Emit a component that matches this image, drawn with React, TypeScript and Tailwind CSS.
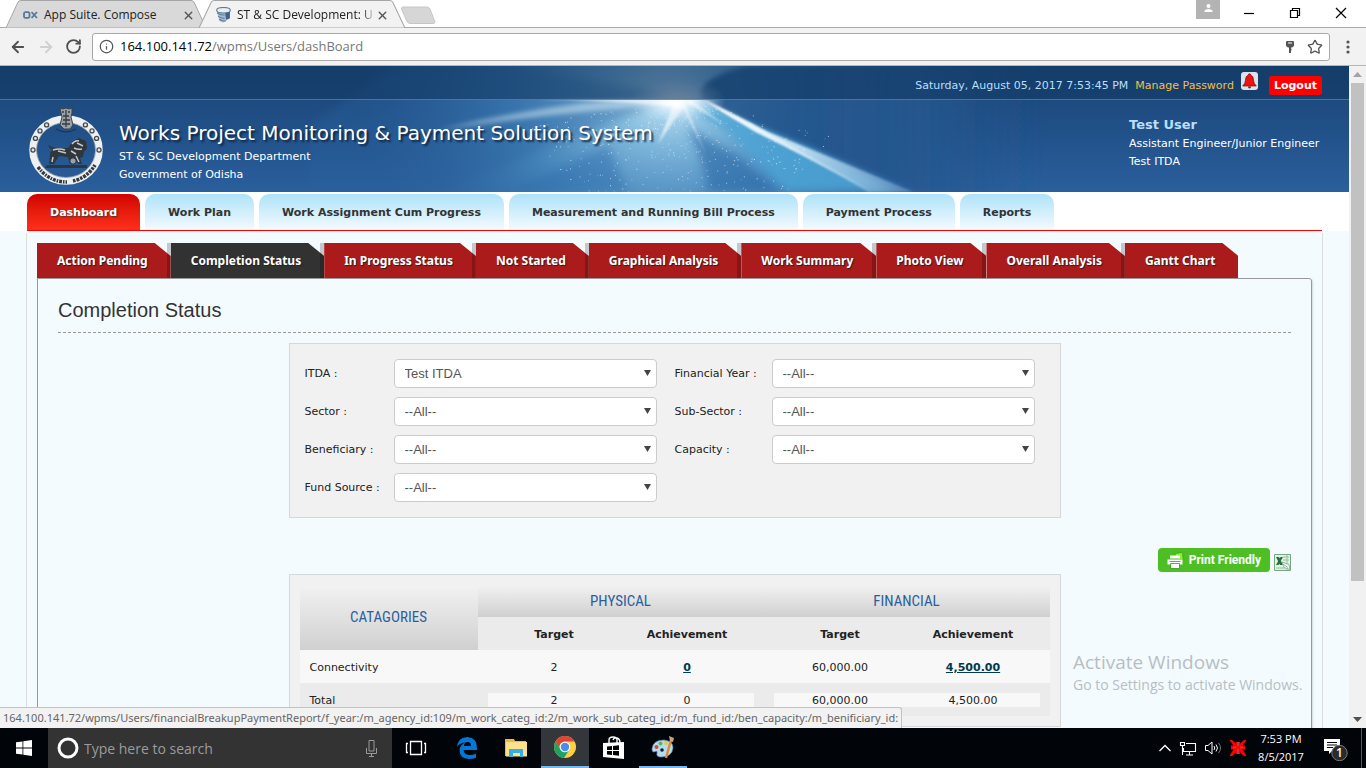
import React from 'react';
import { ArrowLeft, ArrowRight, Info, RotateCw, Star, X } from 'lucide-react';

const SEGOE = "font-['Open_Sans','Noto_Sans',sans-serif]";
const VERDANA = "font-['DejaVu_Sans',sans-serif]";

function BrowserTab({ title, active, icon, className }: { title: string; active?: boolean; icon: React.ReactNode; className: string }) {
  return (
    <div className={`relative flex h-7 items-center ${className}`}>
      <svg className="absolute inset-0 h-full w-full" viewBox="0 0 200 28" preserveAspectRatio="none" aria-hidden="true">
        <path
          d="M0 28 L12 2 Q13 .5 15 .5 H185 Q187 .5 188 2 L200 28Z"
          fill={active ? '#f2f2f2' : '#d9d9d9'}
          stroke="#a5a5a5"
        />
      </svg>
      <div className="relative flex h-full w-full items-center pt-[2px]">
        <span className="flex w-4 shrink-0 justify-center">{icon}</span>
        <span
          className={`ml-[6px] min-w-0 flex-1 text-xs whitespace-nowrap text-[#222] ${active ? '[mask-image:linear-gradient(to_right,black_90%,transparent)]' : ''}`}
        >
          {title}
        </span>
        <button aria-label={`Close ${title}`} className="shrink-0 text-[#555]">
          <X size={13} strokeWidth={2.6} />
        </button>
      </div>
    </div>
  );
}

function BrowserChrome() {
  return (
    <div className={`shrink-0 ${SEGOE}`}>
      <div className="flex h-7 border-b border-[#a9a9a9] bg-white">
        <BrowserTab
          title="App Suite. Compose"
          className="ml-[6px] w-[200px] pr-[11px] pl-4"
          icon={
            <svg width="15" height="8" viewBox="0 0 15 8" fill="none" stroke="#56789a" strokeWidth="1.800" aria-hidden="true">
              <rect x="1" y="1.200" width="5.500" height="5.600" rx="1.500" />
              <path d="M8.500 1l5.500 6M14 1L8.500 7" />
            </svg>
          }
        />
        <BrowserTab
          title="ST & SC Development: U"
          active
          className="-ml-[7px] w-[206px] pr-[16px] pl-4"
          icon={
            <svg width="15" height="16" viewBox="0 0 14 15" aria-hidden="true">
              <path d="M1 3v2l2 8q2 1.500 4 1.500l6-4V3z" fill="#a9bccd" />
              <ellipse cx="7" cy="3" rx="6.400" ry="2.600" fill="#e8eef3" stroke="#5c7b99" />
              <path d="M1 5.500q3 2.500 7 2M2 8.500q3 2.500 6 2M3 11.500q3 2 6 1.500" fill="none" stroke="#5c7b99" />
              <path d="M8.500 6l4.500-1.500v6l-3.500 1.500z" fill="#3f628a" />
            </svg>
          }
        />
        <button aria-label="New tab" className="ml-[-5px] h-[24px] w-[36px]">
          <svg width="36" height="24" viewBox="0 0 36 24" aria-hidden="true">
            <path d="M3 7h24q2 0 3 2l5 13q0 1.500-2 1.500H10q-2 0-3-2L1.500 9Q1.500 7 3 7z" fill="#d6d6d6" stroke="#c6c6c6" />
          </svg>
        </button>
        <div className="flex-1" />
        <button aria-label="Profile" className="flex h-[19px] w-6 items-start justify-center bg-[#b3b3b3] pt-1">
          <svg width="9" height="9" viewBox="0 0 9 9" fill="#fff" aria-hidden="true">
            <circle cx="4.500" cy="2" r="2" />
            <path d="M.5 8V6.500Q2 5 4.500 5t4 1.500V8z" />
          </svg>
        </button>
        <div className="flex w-[146px] pl-[6px]">
          {[
            ['Minimize', 'M1 6.500h10'],
            ['Restore', 'M1.500 3.500h7v7h-7zM3.500 3.500v-2h7v7h-2'],
            ['Close', 'M1 1l10 10M11 1L1 11'],
          ].map(([name, d]) => (
            <button key={name} aria-label={name} className="flex h-[26px] w-[46px] items-center justify-center">
              <svg width="12" height="12" viewBox="0 0 12 12" fill="none" stroke="#000" strokeWidth="1.200" aria-hidden="true">
                <path d={d} />
              </svg>
            </button>
          ))}
        </div>
      </div>
      <div className="flex h-[38px] items-center border-b border-[#b6b6b6] bg-[#f2f2f2] pr-4 pl-[9px]">
        <button aria-label="Back" className="text-[#505050]"><ArrowLeft size={18} strokeWidth={2.4} /></button>
        <button aria-label="Forward" className="ml-[10px] text-[#d0d0d0]"><ArrowRight size={18} strokeWidth={2.4} /></button>
        <button aria-label="Reload" className="ml-[10px] text-[#505050]"><RotateCw size={17} strokeWidth={2.6} /></button>
        <div className="ml-[10px] flex h-[28px] flex-1 items-center rounded-[3px] border border-[#a9a9a9] bg-white px-[6px]">
          <Info size={15} className="text-[#555]" />
          <span className="ml-[6px] flex-1 text-[13px] text-[#777]">
            <span className="text-black">164.100.141.72</span>/wpms/Users/dashBoard
          </span>
          <button aria-label="Saved passwords">
            <svg width="10" height="14" viewBox="0 0 10 14" aria-hidden="true">
              <path d="M2 1h6q1 0 1 1v4L7 7.500H3L1 6V2q0-1 1-1z" fill="#555" />
              <path d="M3 3h4" stroke="#fff" />
              <path d="M5 7v6M5 9.500h1.500" stroke="#555" strokeWidth="2" />
            </svg>
          </button>
          <button aria-label="Bookmark this page" className="ml-[12px] text-[#555]"><Star size={16} strokeWidth={2} /></button>
        </div>
        <button aria-label="Menu" className="ml-4">
          <svg width="4" height="14" viewBox="0 0 4 14" fill="#555" aria-hidden="true">
            <circle cx="2" cy="2" r="1.600" /><circle cx="2" cy="7" r="1.600" /><circle cx="2" cy="12" r="1.600" />
          </svg>
        </button>
      </div>
    </div>
  );
}

function noise(n: number) {
  const v = Math.sin(n * 127.1 + 11.7) * 43758.5453;
  return v - Math.floor(v);
}

const sparks = Array.from({ length: 420 }, (_, i) => {
  const angle = 0.25 + noise(i) * 2.7;
  const dist = 10 + noise(i + 900) * 150;
  return { x: 372 + Math.cos(angle) * dist, y: 34 + Math.sin(angle) * dist * 0.8, o: 0.25 + noise(i + 2000) * 0.6 };
});

function BannerArt() {
  return (
    <svg className="absolute top-0 left-1/2 h-full w-[734px] -translate-x-1/2" viewBox="0 0 734 126" aria-hidden="true">
      <defs>
        <radialGradient id="glow" gradientUnits="userSpaceOnUse" cx="360" cy="30" r="310" gradientTransform="translate(0 6) scale(1 .8)">
          <stop offset="0" stopColor="#c6e8f7" />
          <stop offset=".2" stopColor="#85bde0" stopOpacity=".95" />
          <stop offset=".5" stopColor="#4b8fc4" stopOpacity=".75" />
          <stop offset="1" stopColor="#2e66a0" stopOpacity="0" />
        </radialGradient>
        <radialGradient id="sun">
          <stop offset="0" stopColor="#fff" />
          <stop offset=".3" stopColor="#fff" stopOpacity=".75" />
          <stop offset="1" stopColor="#cbeafa" stopOpacity="0" />
        </radialGradient>
        <linearGradient id="beam" x1="0" y1="0" x2="1" y2="1">
          <stop offset="0" stopColor="#fff" />
          <stop offset=".45" stopColor="#d8edf8" stopOpacity=".85" />
          <stop offset="1" stopColor="#9cc2e0" stopOpacity=".35" />
        </linearGradient>
        <linearGradient id="shade" x1="0" y1="0" x2="1" y2="0">
          <stop offset="0" stopColor="#1f4f86" stopOpacity=".85" />
          <stop offset=".5" stopColor="#22538a" stopOpacity=".9" />
          <stop offset="1" stopColor="#24588f" stopOpacity="0" />
        </linearGradient>
        <filter id="soft1" x="-20%" y="-20%" width="140%" height="140%"><feGaussianBlur stdDeviation="1.200" /></filter>
        <filter id="soft2" x="-20%" y="-20%" width="140%" height="140%"><feGaussianBlur stdDeviation="2.500" /></filter>
        <filter id="soft4" x="-20%" y="-20%" width="140%" height="140%"><feGaussianBlur stdDeviation="5" /></filter>
      </defs>
      <rect width="734" height="126" fill="url(#glow)" />
      <path d="M90 0H200L370 30L130 126H0V60z" fill="#2a629e" opacity=".35" filter="url(#soft4)" />
      <path d="M400 126Q395 90 380 62L430 90L470 126Z" fill="#2b67a6" opacity=".6" filter="url(#soft4)" />
      <path d="M370 33L460 62L590 126H478L420 66Z" fill="#4ea5d6" opacity=".85" filter="url(#soft4)" />
      <path d="M200 126L300 80L320 126Z" fill="#2f6cab" opacity=".45" filter="url(#soft4)" />
      <path d="M394 33Q440 58 500 80L612 126H734V0H440Q400 8 392 26Z" fill="url(#shade)" filter="url(#soft2)" />
      <path d="M370 30Q250 34 130 64Q250 46 372 38Z" fill="#dff1fa" opacity=".5" filter="url(#soft2)" />
      <path d="M340 33H372V42Q340 36 230 33Z" fill="#fff" opacity=".6" filter="url(#soft1)" />
      <path d="M366 36L350 78L376 40Z" fill="#fff" opacity=".6" filter="url(#soft1)" />
      <path d="M372 36L398 88L377 38Z" fill="#fff" opacity=".45" filter="url(#soft1)" />
      <path d="M378 36L418 60L384 34Z" fill="#fff" opacity=".5" filter="url(#soft1)" />
      <path d="M394 33Q430 50 460 66Q520 90 605 126H560Q500 90 448 66Q420 50 394 33Z" fill="url(#beam)" filter="url(#soft1)" />
      <path d="M394 33Q430 50 460 67Q500 90 565 126Q500 92 448 66Z" fill="#fff" opacity=".5" filter="url(#soft1)" />
      <ellipse cx="370" cy="34" rx="48" ry="22" fill="url(#sun)" />
      {sparks.map((s, i) => (
        <rect key={i} x={s.x} y={s.y} width="1" height="1" fill="#e6f6ff" opacity={s.o} />
      ))}
    </svg>
  );
}

function Emblem() {
  const studs = [180, 202, 218, 234, 306, 322, 338, 0];
  return (
    <svg width="74" height="78" viewBox="0 0 74 78" role="img" aria-label="Government of Odisha emblem">
      <ellipse cx="37" cy="43" rx="33" ry="31" fill="none" stroke="#eef0f1" strokeWidth="7.500" />
      <ellipse cx="37" cy="43" rx="29.500" ry="27.500" fill="none" stroke="#8e979e" strokeWidth=".8" />
      {studs.map((deg) => {
        const t = (deg * Math.PI) / 180;
        return (
          <g key={deg}>
            <circle cx={37 + 33 * Math.cos(t)} cy={43 + 31 * Math.sin(t)} r="2.700" fill="#444b50" />
            <circle cx={37 + 33 * Math.cos(t)} cy={43 + 31 * Math.sin(t)} r="1.400" fill="#dfe3e5" />
          </g>
        );
      })}
      <path d="M9 60Q20 75 38 75" fill="none" stroke="#33393d" strokeWidth="3.500" strokeDasharray="3 1 1.500 1" />
      <path d="M44 74Q58 71 66 58" fill="none" stroke="#33393d" strokeWidth="3.500" strokeDasharray="2.500 1 3 1" />
      <path d="M31 1l3 1 3-1 3 1 3-1 0 5-1 4 1 4 1 4-3 4h-6l-4-4 1-4 1-4-1-4z" fill="#9aa2a7" stroke="#3b4348" />
      <path d="M33 5h2M39 5h2M34 9h6M34 13h7M33 17h8M37 3v17" stroke="#353d42" strokeWidth="1.300" />
      <path d="M27 22q10 6 20 0" fill="none" stroke="#20303e" />
      <path d="M18 58h40v3H16z" fill="#2e363b" />
      <path d="M20 57l1-9q0-4 3-5-4-1-5-5l4 2q3 1 7 1h9l5-7 6-3 7 3 1 7-3 4-1 5-3 1 2 6h-4l-3-6-3 4 2 2h-4l-2-7-9-1-5 8z" fill="#30373c" />
      <path d="M24 43q6-2 12 0M43 37q3-4 7-3M45 41q4 2 8 1M24 50l-1 5M47 49l3 6M29 44l8 2M48 36l6 3M42 44l5 3" fill="none" stroke="#c2c9cd" strokeWidth="1.500" />
      <circle cx="44" cy="54" r="3.200" fill="#9aa3a8" stroke="#252b30" />
    </svg>
  );
}

function Header() {
  return (
    <header className="relative h-[126px] overflow-hidden bg-linear-to-b from-[#1a4474] via-[#215088] to-[#2a5f9d] text-white">
      <BannerArt />
      <div className="relative flex h-[34px] items-center justify-end border-b border-[#7fa3c6]/50 bg-[#123a66]/65 pt-[6px] pr-[27px] text-[11px]">
        <span className="pt-[2px] text-[#b9dffc]">Saturday, August 05, 2017 7:53:45 PM</span>
        <a href="#password" className="ml-[7px] pt-[2px] text-[#eec04a]">Manage Password</a>
        <button aria-label="Notifications" className="mb-[10px] ml-[7px] flex h-[18px] w-[17px] items-center justify-center rounded-[3px] bg-[#dce4ea]">
          <svg width="15" height="16" viewBox="0 0 15 16" aria-hidden="true">
            <path d="M7.500.8Q8.800.8 8.800 2.200Q11.500 3 11.500 7q0 3.500 2.800 6H.7Q3.500 10.500 3.500 7q0-4 2.700-4.800Q6.200.8 7.500.8z" fill="#ec1313" stroke="#7c0c0c" strokeWidth=".7" />
            <path d="M6 13.500h3q0 2-1.500 2T6 13.500z" fill="#8c0c0c" />
          </svg>
        </button>
        <button className="ml-[11px] h-[19px] rounded-[3px] bg-[#f00] px-[5px] pt-px font-bold">Logout</button>
      </div>
      <div className="relative flex items-start pr-[27px] pl-[29px]">
        <div className="mt-[7px]"><Emblem /></div>
        <div className="ml-4 flex-1 pt-[21px]">
          <h1 className="text-[20px] leading-[25px] [text-shadow:2px_2px_2px_#10243a]">Works Project Monitoring &amp; Payment Solution System</h1>
          <p className="pt-[2px] text-[11px] leading-[18px]">ST &amp; SC Development Department</p>
          <p className="text-[11px] leading-[18px]">Government of Odisha</p>
        </div>
        <div className="w-[193px] pt-[15px] text-[11px] leading-[18px]">
          <p className="text-[13px] leading-5 font-bold text-[#b9dffc]">Test User</p>
          <p>Assistant Engineer/Junior Engineer</p>
          <p>Test ITDA</p>
        </div>
      </div>
    </header>
  );
}

const mainNav = ['Dashboard', 'Work Plan', 'Work Assignment Cum Progress', 'Measurement and Running Bill Process', 'Payment Process', 'Reports'];

function MainNav() {
  return (
    <div className="bg-white pt-[2px]">
      <nav className="mx-[27px] flex gap-[5px] border-b border-[#f00]">
        {mainNav.map((item, i) => (
          <a
            key={item}
            href={`#${item}`}
            className={
              i === 0
                ? 'rounded-t-[10px] bg-linear-to-b from-[#d00000] to-[#ff2f1a] px-[23px] pt-px text-[11px] leading-[35px] font-bold whitespace-nowrap text-white [text-shadow:1px_1px_2px_#333]'
                : 'rounded-t-[10px] bg-linear-to-b from-[#aee2f9] to-[#f3fbff] px-[23px] pt-px text-[11px] leading-[35px] font-bold whitespace-nowrap text-[#333]'
            }
          >
            {item}
          </a>
        ))}
      </nav>
    </div>
  );
}

const subTabs = ['Action Pending', 'Completion Status', 'In Progress Status', 'Not Started', 'Graphical Analysis', 'Work Summary', 'Photo View', 'Overall Analysis', 'Gantt Chart'];

function SubTabs() {
  return (
    <div role="tablist" className="flex">
      {subTabs.map((item, i) => (
        <button
          key={item}
          role="tab"
          aria-selected={i === 1}
          className="relative h-[35px] font-['Noto_Sans',sans-serif] text-xs font-bold whitespace-nowrap text-white"
        >
          <span
            className={`flex h-full items-center pr-[23px] pl-5 [clip-path:polygon(0_0,calc(100%_-_16px)_0,100%_13px,100%_100%,0_100%)] [text-shadow:1px_1px_1px_#222] ${i === 1 ? 'bg-[#323232]' : 'bg-[#ab1b1b]'}`}
          >
            {item}
          </span>
          {i < subTabs.length - 1 && <span className="absolute inset-y-0 right-0 w-1 bg-black/20" />}
        </button>
      ))}
    </div>
  );
}

const filters: [string, string][] = [
  ['ITDA', 'Test ITDA'],
  ['Financial Year', '--All--'],
  ['Sector', '--All--'],
  ['Sub-Sector', '--All--'],
  ['Beneficiary', '--All--'],
  ['Capacity', '--All--'],
  ['Fund Source', '--All--'],
];

function Filters() {
  return (
    <form className="grid grid-cols-[89px_263px_115px_263px] items-center gap-y-[9px] border border-[#d4d8db] bg-[#f1f1f1] py-[15px] pl-[15px]">
      {filters.map(([label, value], i) => (
        <React.Fragment key={label}>
          <label htmlFor={`filter-${i}`} className={i % 2 ? 'pt-[2px] pl-[18px] text-[11px] whitespace-nowrap' : 'pt-[2px] text-[11px] whitespace-nowrap'}>
            {label} :
          </label>
          <div className="relative">
            <select
              id={`filter-${i}`}
              className="block h-[29px] w-full appearance-none rounded-[4px] border border-[#ccc] bg-white px-[10px] font-['Liberation_Sans',sans-serif] text-[13px] text-[#555]"
            >
              <option>{value}</option>
            </select>
            <svg className="pointer-events-none absolute top-[11px] right-[6px]" width="7" height="6" viewBox="0 0 7 6" aria-hidden="true">
              <path d="M0 0h7L3.500 6z" fill="#444" />
            </svg>
          </div>
        </React.Fragment>
      ))}
    </form>
  );
}

function SummaryTable() {
  const group = "bg-linear-to-b from-[#f2f2f2] to-[#d0d0d0] font-['Liberation_Sans_Narrow','Roboto_Condensed','Roboto',sans-serif] text-[15px] font-normal text-[#2a5f9d]";
  return (
    <div className="border border-[#d4d8db] bg-[#f1f1f1] p-[10px]">
      <table className="w-full table-fixed border-collapse text-center text-[11px] text-[#222]">
        <colgroup>
          <col className="w-[178px]" />
          <col /><col /><col /><col />
        </colgroup>
        <thead>
          <tr className="h-8">
            <th rowSpan={2} className={group}>CATAGORIES</th>
            <th colSpan={2} className={group}>PHYSICAL</th>
            <th colSpan={2} className={group}>FINANCIAL</th>
          </tr>
          <tr className="h-[33px] bg-[#ebebeb]">
            <th className="pt-[3px] pl-[10px]">Target</th>
            <th className="pt-[3px] pr-[10px]">Achievement</th>
            <th className="pt-[3px] pl-[10px]">Target</th>
            <th className="pt-[3px] pr-[10px]">Achievement</th>
          </tr>
        </thead>
        <tbody>
          <tr className="h-[33px] bg-[#f8f8f8]">
            <td className="pt-[3px] pl-[10px] text-left">Connectivity</td>
            <td className="pt-[3px] pl-[10px]">2</td>
            <td className="pt-[3px] pr-[10px]"><a href="#physical" className="font-bold text-[#003a4c] underline">0</a></td>
            <td className="pt-[3px] pl-[10px]">60,000.00</td>
            <td className="pt-[3px] pr-[10px]"><a href="#financial" className="font-bold text-[#003a4c] underline">4,500.00</a></td>
          </tr>
          <tr className="h-[33px] bg-[#ebebeb]">
            <td className="pt-[3px] pl-[10px] text-left">Total</td>
            <td className="pl-[10px]"><div className="bg-[#f8f8f8] pt-px leading-[13px]">2</div></td>
            <td className="pr-[10px]"><div className="bg-[#f8f8f8] pt-px leading-[13px]">0</div></td>
            <td className="pl-[10px]"><div className="bg-[#f8f8f8] pt-px leading-[13px]">60,000.00</div></td>
            <td className="pr-[10px]"><div className="bg-[#f8f8f8] pt-px leading-[13px]">4,500.00</div></td>
          </tr>
        </tbody>
      </table>
    </div>
  );
}

function ExportBar() {
  return (
    <div className="mt-[30px] mb-[2px] flex items-start justify-end gap-1">
      <button className="flex h-6 items-center gap-[5px] rounded-[4px] bg-[#4dbf24] px-[9px] font-['Roboto',sans-serif] text-xs font-bold text-white">
        <svg width="17" height="17" viewBox="0 0 17 17" aria-hidden="true">
          <path d="M8 1.500L15.500.5 16 8 9 6z" fill="#8bf03a" stroke="#2f9a10" strokeWidth=".6" />
          <path d="M3 3.500h10v3h-10z" fill="#fff" />
          <path d="M.5 7.500h15v5H.5z" fill="#fff" />
          <path d="M2.500 9.500h11" stroke="#4dbf24" />
          <path d="M3.500 11.500h9v5h-9z" fill="#fff" stroke="#2f9a10" strokeWidth=".8" />
        </svg>
        Print Friendly
      </button>
      <button aria-label="Export to Excel" className="mt-[6px]">
        <svg width="17" height="17" viewBox="0 0 17 17" aria-hidden="true">
          <path d="M.5.5h16v16H.5z" fill="#e3f1e6" stroke="#76a684" />
          <path d="M9 3h6M9 6h6M13 1v15M2 14h9" stroke="#8fc39c" />
          <path d="M2 3h3l4 8H6zM6.500 3H9l-4.500 8H2z" fill="#24713b" />
          <path d="M8 8l7 2.500 1 5-6-2z" fill="#f4fbf5" stroke="#7aa587" strokeWidth=".8" />
          <path d="M9 10l5 3.500" stroke="#7aa587" strokeWidth=".8" />
        </svg>
      </button>
    </div>
  );
}

function Page() {
  return (
    <div className={`min-h-0 min-w-0 flex-1 overflow-hidden bg-[#f3fbff] text-[#222] ${VERDANA}`}>
      <Header />
      <MainNav />
      <main className="mx-[26px] mt-[2px] border-x border-[#ddd] px-[10px] pt-[10px]">
        <SubTabs />
        <section className="rounded-tr-[3px] border border-[#999] px-5 pt-[18px] pb-40 shadow-[1px_1px_2px_#0002]">
          <h2 className="border-b border-dashed border-[#999] pb-[9px] font-['Liberation_Sans',sans-serif] text-[20px] leading-[26px] text-[#333]">
            Completion Status
          </h2>
          <div className="mx-auto mt-[10px] max-w-[772px]">
            <Filters />
          </div>
          <ExportBar />
          <div className="mx-auto max-w-[772px]">
            <SummaryTable />
          </div>
        </section>
      </main>
    </div>
  );
}

function Scrollbar() {
  return (
    <div className="flex w-[17px] shrink-0 flex-col items-center bg-[#f1f1f1] py-[6px]" aria-hidden="true">
      <svg width="9" height="5" viewBox="0 0 9 5"><path d="M0 5L4.500 0 9 5z" fill="#a3a3a3" /></svg>
      <div className="mt-[6px] h-[498px] w-[13px] bg-[#c1c1c1]" />
      <div className="flex-1" />
      <svg width="9" height="5" viewBox="0 0 9 5"><path d="M0 0h9L4.500 5z" fill="#505050" /></svg>
    </div>
  );
}

const apps: { name: string; state: string; icon: React.ReactNode }[] = [
  {
    name: 'Task View',
    state: 'mr-[2px]',
    icon: (
      <svg width="22" height="16" viewBox="0 0 22 16" fill="none" stroke="#fff" strokeWidth="1.300">
        <path d="M5.500 1.500h11v13h-11zM3 3.500H1.500v9H3M19 3.500h1.500v9H19" />
      </svg>
    ),
  },
  {
    name: 'Microsoft Edge',
    state: '',
    icon: (
      <svg width="22" height="24" viewBox="0 0 22 24">
        <path d="M1 11Q2 1 11.500 1 21 1.500 21 12v2H7.500q.5 5 6.500 5 3.500 0 6-1.600v4.300Q17 23 13 23 3.500 22.500 3.500 14 4 9 9 6.500 3 7 1 11zm7-1h7q0-4-3.500-4T8 10z" fill="#0078d7" />
      </svg>
    ),
  },
  {
    name: 'File Explorer',
    state: '',
    icon: (
      <svg width="22" height="20" viewBox="0 0 22 20">
        <path d="M0 1h9l1 2h11v15H0z" fill="#e7b84a" />
        <path d="M1 4h21v14.500H1z" fill="#fce08a" />
        <path d="M4 11h14v8h-3v-4H8v4H4z" fill="#35aee2" />
      </svg>
    ),
  },
  {
    name: 'Google Chrome',
    state: 'border-b-2 border-[#76b9ed] bg-[#33373c]',
    icon: (
      <svg width="22" height="22" viewBox="0 0 22 22">
        <circle cx="11" cy="11" r="11" fill="#fdd043" />
        <path d="M1.500 5.500A11 11 0 0 1 20.500 5.500H11A5.500 5.500 0 0 0 6 13.500z" fill="#dc4437" />
        <path d="M1.500 5.500A11 11 0 0 0 10 22l5.500-8.500-9 0z" fill="#1da462" />
        <circle cx="11" cy="11" r="5.300" fill="#fff" />
        <circle cx="11" cy="11" r="4.200" fill="#4b8bf4" />
      </svg>
    ),
  },
  {
    name: 'Store',
    state: '',
    icon: (
      <svg width="22" height="24" viewBox="0 0 22 24">
        <path d="M6 7V4q0-3 4-3t4 3v3M10 4q1-3 4-2t3 5" fill="none" stroke="#fff" strokeWidth="1.400" />
        <path d="M0 7l21-1v17L0 21z" fill="#fff" />
        <path d="M4 10.500l5-.5v4H4zM10 10l6-.7V14h-6zM4 15h5v4l-5-.5zM10 15h6v4.700l-6-.7z" fill="#000" />
      </svg>
    ),
  },
  {
    name: 'Paint',
    state: 'border-b-2 border-[#76b9ed]',
    icon: (
      <svg width="24" height="24" viewBox="0 0 24 24">
        <path d="M1 14Q2 5 13 5q9 1 9 8-1 9-12 9-5 0-4-4Q7 15 3 17q-2 0-2-3z" fill="#b4dbf0" stroke="#5f92b2" strokeWidth=".7" />
        <circle cx="5.500" cy="12" r="2" fill="#e34234" />
        <circle cx="9.500" cy="8.500" r="2" fill="#57b947" />
        <circle cx="15" cy="8" r="2" fill="#f3c62f" />
        <circle cx="11" cy="15" r="1.800" fill="#10202d" />
        <path d="M15 23l5-18" stroke="#e08a32" strokeWidth="2.400" />
        <path d="M19 6l-1-5 5 2-1 4z" fill="#c9a27a" />
      </svg>
    ),
  },
];

function Taskbar() {
  return (
    <footer className={`flex h-10 shrink-0 bg-[#010409] text-white ${SEGOE}`}>
      <button aria-label="Start" className="flex w-12 items-center justify-center">
        <svg width="16" height="16" viewBox="0 0 16 16" fill="#fff" aria-hidden="true">
          <path d="M0 2.300L6.500 1.400V7.600H0zM7.300 1.300L16 0v7.600H7.300zM0 8.400h6.500v6.200L0 13.700zM7.300 8.400H16V16l-8.700-1.300z" />
        </svg>
      </button>
      <div className="flex w-[344px] items-center bg-[#333] pr-[14px] pl-[9px]">
        <svg width="22" height="22" viewBox="0 0 22 22" aria-hidden="true">
          <circle cx="11" cy="11" r="9" fill="none" stroke="#fff" strokeWidth="3" />
        </svg>
        <input aria-label="Search" placeholder="Type here to search" className="ml-[5px] min-w-0 flex-1 bg-transparent text-[14px] outline-none placeholder:text-[#9b9b9b]" />
        <svg width="13" height="17" viewBox="0 0 13 17" fill="none" stroke="#9b9b9b" aria-label="Voice search">
          <path d="M4 .5h5v10.500H4zM1.500 8v5.500h10V8M6.500 13.500v3M4 16.500h5" />
        </svg>
      </div>
      <div className="flex gap-px">
        {apps.map((app) => (
          <button key={app.name} aria-label={app.name} className={`flex w-12 items-center justify-center ${app.state}`}>
            {app.icon}
          </button>
        ))}
      </div>
      <div className="flex-1" />
      <div className="flex items-center gap-[8px]">
        <svg width="12" height="8" viewBox="0 0 12 8" fill="none" stroke="#fff" strokeWidth="1.300" aria-label="Show hidden icons">
          <path d="M.5 7L6 1.500 11.500 7" />
        </svg>
        <svg width="18" height="15" viewBox="0 0 18 15" fill="none" stroke="#fff" strokeWidth="1.100" aria-label="Network">
          <path d="M7 2.500h9.500v8H4.500V7M10.500 11v3M7 14h7M1.500 1.500h4v3h-4zM3.500 5v9" />
        </svg>
        <svg width="17" height="14" viewBox="0 0 17 14" fill="none" stroke="#fff" aria-label="Volume">
          <path d="M.5 4.500H3l4-3.500v12L3 9.500H.5zM9 5q1.500 2 0 4M11 3.500q3 3.500 0 7" />
          <path d="M13.500 2q4 5 0 10" stroke="#777" />
        </svg>
        <svg width="16" height="16" viewBox="0 0 16 16" aria-label="Alert">
          <path d="M0 0h2l4 3.500V2h4v1.500L14 0h2v1l-3.500 4.500H15v4h-2.500L16 15v1h-2l-4-3.500V14H6v-1.500L2 16H0v-1l3.500-5.500H1v-4h2.500L0 1z" fill="#f00" />
          <path d="M8 2v4M8 9v5M3 7.500h3M10 7.500h3" stroke="#8d5a5a" strokeWidth="1.500" />
        </svg>
      </div>
      <div className="ml-[10px] flex w-[50px] flex-col justify-center text-center text-[11px] leading-[18px] whitespace-nowrap">
        <span>7:53 PM</span>
        <span>8/5/2017</span>
      </div>
      <button aria-label="Notifications" className="ml-[17px] flex items-center">
        <svg width="26" height="26" viewBox="0 0 26 26" aria-hidden="true">
          <path d="M1 4h16v12H9l-3 3v-3H1z" fill="#fff" />
          <path d="M4 7.500h10M4 10h10M4 12.500h6" stroke="#010409" strokeWidth="1.200" />
          <circle cx="16.500" cy="18" r="7.700" fill="#2b2b2b" stroke="#777" />
          <text x="16.500" y="22" textAnchor="middle" fontSize="12" fontWeight="600" fill="#fff">1</text>
        </svg>
      </button>
      <div className="ml-[12px] w-[5px] border-l border-[#555]" />
    </footer>
  );
}

export default function App() {
  return (
    <div className="flex h-screen flex-col overflow-hidden">
      <BrowserChrome />
      <div className="relative flex min-h-0 flex-1">
        <Page />
        <Scrollbar />
        <div className={`pointer-events-none absolute right-[57px] bottom-[32px] w-[236px] whitespace-nowrap text-[#b9bec1] ${SEGOE}`}>
          <p className="text-[19px] leading-6">Activate Windows</p>
          <p className="text-[14px] leading-[22px]">Go to Settings to activate Windows.</p>
        </div>
        <div className="absolute bottom-0 left-0 h-[21px] rounded-tr-[3px] border-t border-r border-[#c2c2c2] bg-[#f2f2f2] px-[3px] font-['Noto_Sans',sans-serif] text-[11px] leading-5 whitespace-nowrap text-[#666]">
          164.100.141.72/wpms/Users/financialBreakupPaymentReport/f_year:/m_agency_id:109/m_work_categ_id:2/m_work_sub_categ_id:/m_fund_id:/ben_capacity:/m_benificiary_id:
        </div>
      </div>
      <Taskbar />
    </div>
  );
}
